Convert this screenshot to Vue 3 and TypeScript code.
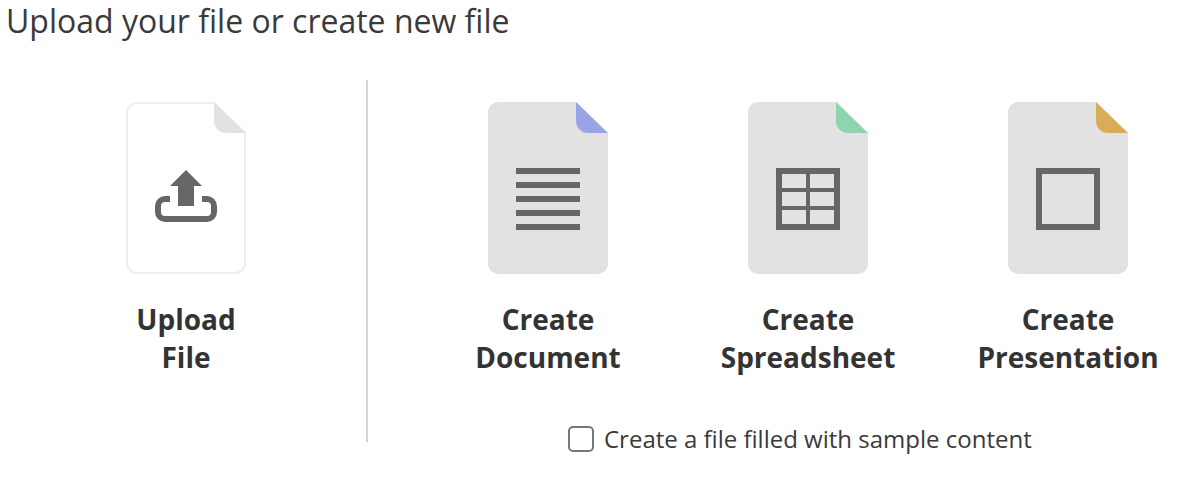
<script setup lang="ts">
interface Tile {
  first: string
  second: string
  fold: string
  kind: 'doc' | 'sheet' | 'slide'
}

const tiles: Tile[] = [
  { first: 'Create', second: 'Document', fold: '#98a4e6', kind: 'doc' },
  { first: 'Create', second: 'Spreadsheet', fold: '#8ed4ac', kind: 'sheet' },
  { first: 'Create', second: 'Presentation', fold: '#d9ac58', kind: 'slide' },
]

// page outline, same for every tile
const PAGE = 'M10 0H88L120 31V162a10 10 0 0 1-10 10H10A10 10 0 0 1 0 162V10A10 10 0 0 1 10 0Z'
const FOLD = 'M88 0L120 31H100A12 12 0 0 1 88 19Z'
const lineYs = [66, 80, 94, 108, 122]
</script>

<template>
  <main class="page">
    <h1 class="title">Upload your file or create new file</h1>
    <div class="body">
      <div class="tile upload">
        <svg class="icon" width="120" height="172" viewBox="0 0 120 172">
          <path d="M10 1H88L119 31V161a10 10 0 0 1-10 10H11A10 10 0 0 1 1 161V11A10 10 0 0 1 11 1Z" fill="#fff" stroke="#eeeeee" stroke-width="2" />
          <path :d="FOLD" fill="#e2e2e2" />
          <path d="M60 68L76 84H68V104H52V84H44Z" fill="#666" />
          <path d="M44 97H39a7 7 0 0 0-7 7V110a7 7 0 0 0 7 7H81a7 7 0 0 0 7-7V104a7 7 0 0 0-7-7H76" fill="none" stroke="#666" stroke-width="6" />
        </svg>
        <div class="label">Upload<br />File</div>
      </div>

      <div class="divider"></div>

      <div class="create">
        <div class="tiles">
          <div v-for="t in tiles" :key="t.kind" class="tile">
            <svg class="icon" width="120" height="172" viewBox="0 0 120 172">
              <path :d="PAGE" fill="#e2e2e2" />
              <path :d="FOLD" :fill="t.fold" />
              <g v-if="t.kind === 'doc'" fill="#666">
                <rect v-for="y in lineYs" :key="y" x="28" :y="y" width="64" height="6" />
              </g>
              <g v-else-if="t.kind === 'sheet'" fill="none" stroke="#666" stroke-width="6">
                <rect x="31" y="69" width="58" height="56" />
                <path d="M60 69V125" stroke-width="4" />
                <path d="M31 88H89M31 106H89" stroke-width="4" />
              </g>
              <rect v-else x="31" y="69" width="58" height="56" fill="none" stroke="#666" stroke-width="6" />
            </svg>
            <div class="label">{{ t.first }}<br />{{ t.second }}</div>
          </div>
        </div>
        <label class="sample">
          <input type="checkbox" class="check" />
          <span>Create a file filled with sample content</span>
        </label>
      </div>
    </div>
  </main>
</template>

<style>
html, body {
  margin: 0;
  background: #fff;
  overflow: hidden;
}
</style>

<style scoped>
.page {
  width: 1192px;
  height: 490px;
  font-family: "Open Sans", sans-serif;
  color: #333;
}

.title {
  margin: 0;
  padding: 0 0 0 6px;
  font-size: 32px;
  font-weight: 400;
  line-height: 42px;
  height: 80px;
  color: #3a3a3a;
}

.body {
  display: flex;
  align-items: flex-start;
}

.upload {
  margin-left: 66px;
  margin-top: 22px;
}

.divider {
  width: 2px;
  height: 362px;
  margin-left: 60px;
  background: #d4d4d4;
}

.create {
  margin-left: 60px;
  padding-top: 22px;
}

.tiles {
  display: flex;
  gap: 20px;
}

.tile {
  width: 240px;
  display: flex;
  flex-direction: column;
  align-items: center;
}

.icon {
  display: block;
  filter: blur(0.4px);
}

.label {
  margin-top: 26px;
  font-size: 28px;
  font-weight: 700;
  line-height: 38px;
  text-align: center;
  color: #333;
}

.sample {
  display: flex;
  align-items: flex-start;
  gap: 10px;
  margin: 50px 0 0 140px;
  font-size: 24px;
  line-height: 26px;
  color: #3a3a3a;
}

.check {
  appearance: none;
  width: 26px;
  height: 26px;
  margin: 0;
  box-sizing: border-box;
  border: 2px solid #777;
  border-radius: 5px;
  background: #fff;
}
</style>
